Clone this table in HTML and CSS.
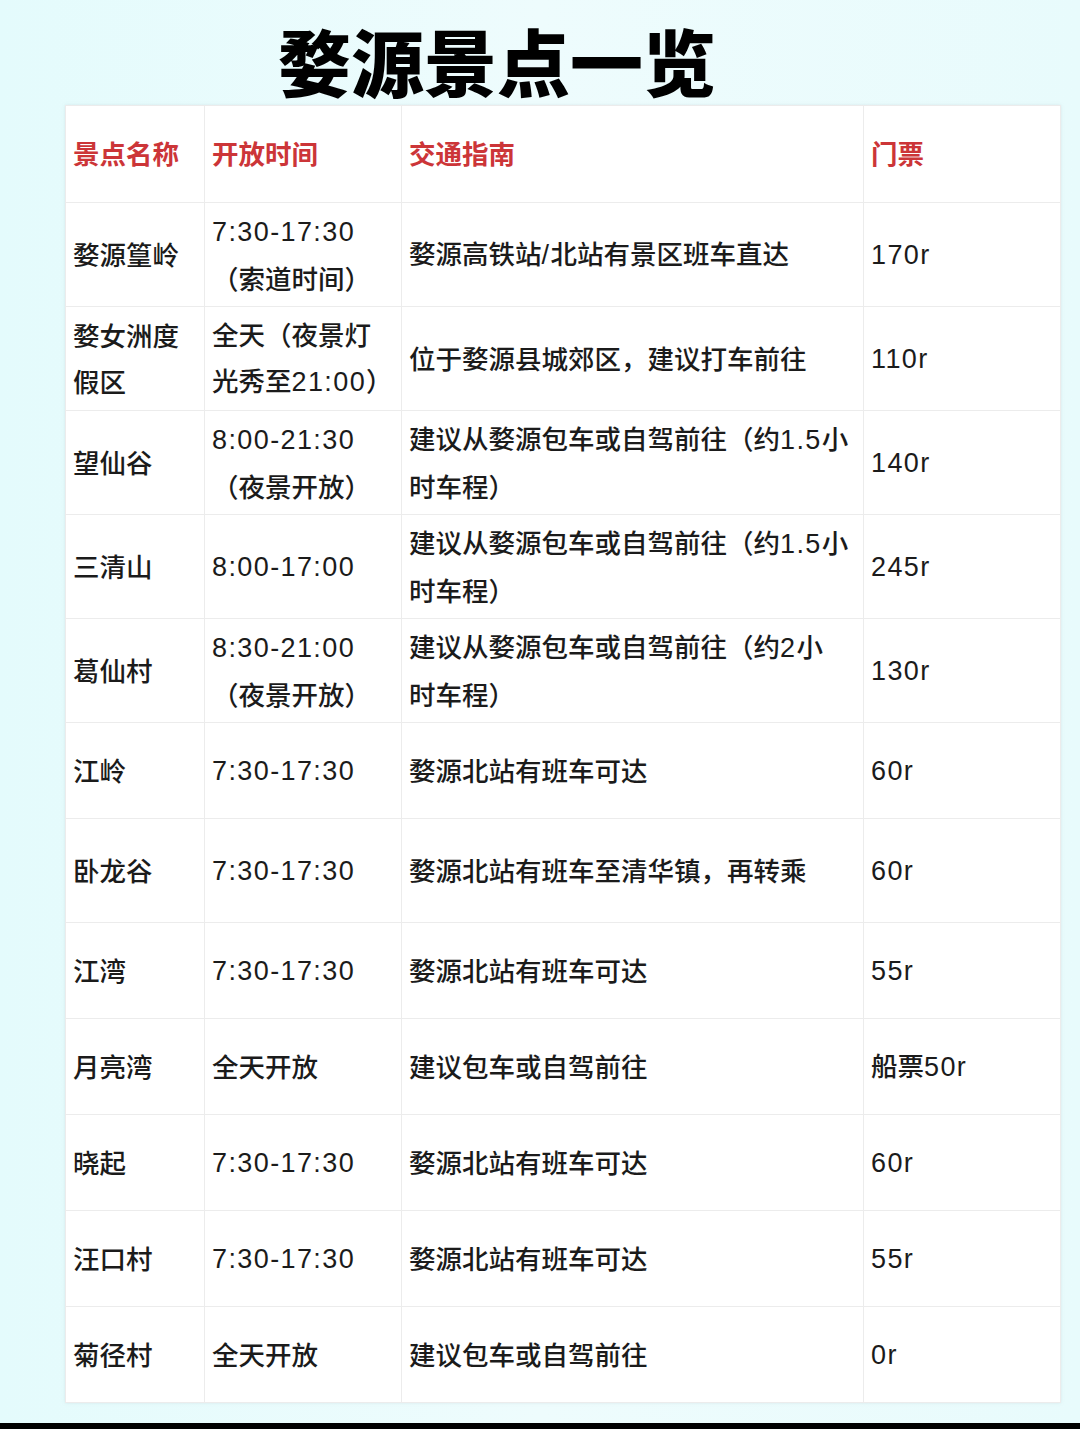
FILE: index.html
```html
<!DOCTYPE html>
<html lang="zh-CN">
<head>
<meta charset="utf-8">
<title>婺源景点一览</title>
<link rel="stylesheet" href="styles.css">
</head>
<body>
<div class="page">
  <h1 class="title">婺源景点一览</h1>
  <table class="spots">
    <colgroup>
      <col class="c1"><col class="c2"><col class="c3"><col class="c4">
    </colgroup>
    <thead>
      <tr class="head"><th>景点名称</th><th>开放时间</th><th>交通指南</th><th>门票</th></tr>
    </thead>
    <tbody>
      <tr class="tall"><td>婺源篁岭</td><td><span class="num">7:30-17:30</span><br>（索道时间）</td><td>婺源高铁站<span class="num">/</span>北站有景区班车直达</td><td><span class="num">170r</span></td></tr>
      <tr class="tall"><td>婺女洲度<br>假区</td><td>全天（夜景灯<br>光秀至<span class="num">21:00</span>）</td><td>位于婺源县城郊区，建议打车前往</td><td><span class="num">110r</span></td></tr>
      <tr class="tall"><td>望仙谷</td><td><span class="num">8:00-21:30</span><br>（夜景开放）</td><td>建议从婺源包车或自驾前往（约<span class="num">1.5</span>小<br>时车程）</td><td><span class="num">140r</span></td></tr>
      <tr class="tall"><td>三清山</td><td><span class="num">8:00-17:00</span></td><td>建议从婺源包车或自驾前往（约<span class="num">1.5</span>小<br>时车程）</td><td><span class="num">245r</span></td></tr>
      <tr class="tall"><td>葛仙村</td><td><span class="num">8:30-21:00</span><br>（夜景开放）</td><td>建议从婺源包车或自驾前往（约<span class="num">2</span>小<br>时车程）</td><td><span class="num">130r</span></td></tr>
      <tr class="short"><td>江岭</td><td><span class="num">7:30-17:30</span></td><td>婺源北站有班车可达</td><td><span class="num">60r</span></td></tr>
      <tr class="tall"><td>卧龙谷</td><td><span class="num">7:30-17:30</span></td><td>婺源北站有班车至清华镇，再转乘</td><td><span class="num">60r</span></td></tr>
      <tr class="short"><td>江湾</td><td><span class="num">7:30-17:30</span></td><td>婺源北站有班车可达</td><td><span class="num">55r</span></td></tr>
      <tr class="short"><td>月亮湾</td><td>全天开放</td><td>建议包车或自驾前往</td><td>船票<span class="num">50r</span></td></tr>
      <tr class="short"><td>晓起</td><td><span class="num">7:30-17:30</span></td><td>婺源北站有班车可达</td><td><span class="num">60r</span></td></tr>
      <tr class="short"><td>汪口村</td><td><span class="num">7:30-17:30</span></td><td>婺源北站有班车可达</td><td><span class="num">55r</span></td></tr>
      <tr class="short"><td>菊径村</td><td>全天开放</td><td>建议包车或自驾前往</td><td><span class="num">0r</span></td></tr>
    </tbody>
  </table>
  <div class="bottom-bar"></div>
</div>
</body>
</html>
```

FILE: styles.css
```css
html, body {
  margin: 0;
  padding: 0;
}

body {
  background: linear-gradient(90deg, #e4fbfc 0%, #eefcfd 50%, #e8fbfc 100%);
  font-family: "Noto Sans CJK SC", "Noto Sans", sans-serif;
  color: #1b1b1b;
  overflow: hidden;
  text-spacing-trim: space-all;
}

.page {
  width: 1080px;
  height: 1429px;
  display: flex;
  flex-direction: column;
}

.title {
  margin: 0;
  padding: 22px 0 0 278px;
  height: 83px;
  font-size: 73px;
  line-height: 74px;
  font-weight: 900;
  color: #000;
}

.spots {
  margin-left: 65px;
  width: 995px;
  border-collapse: collapse;
  table-layout: fixed;
  background: #fff;
  border: 1px solid #e2e8ea;
  box-shadow: 0 0 3px rgba(180, 200, 205, 0.35);
}

.c1 { width: 139px; }
.c2 { width: 197px; }
.c3 { width: 462px; }
.c4 { width: 197px; }

.spots th,
.spots td {
  border: 1px solid #ececec;
  padding: 0 7px;
  text-align: left;
  vertical-align: middle;
  font-size: 26.5px;
  line-height: 46px;
  white-space: nowrap;
}

.spots th {
  color: #cc3538;
  font-weight: 700;
  padding-bottom: 2px;
}

.head {
  height: 97px;
}

.tall {
  height: 104px;
}

.short {
  height: 96px;
}

.spots td {
  font-weight: 500;
  padding-bottom: 2px;
}

.num {
  font-family: "Liberation Sans", "Noto Sans", sans-serif;
  font-weight: 400;
  font-size: 27px;
  letter-spacing: 1.4px;
}

.bottom-bar {
  margin-top: auto;
  height: 6px;
  background: #000;
}
```
